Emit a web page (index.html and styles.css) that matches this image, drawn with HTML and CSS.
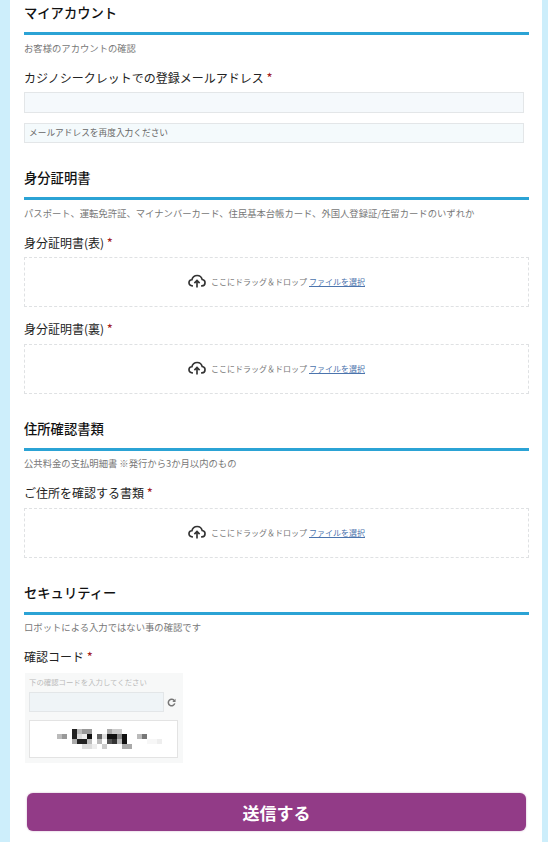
FILE: index.html
```html
<!DOCTYPE html>
<html lang="ja">
<head>
    <meta charset="UTF-8">
    <meta name="viewport" content="width=device-width, initial-scale=1.0">
    <title>マイアカウント</title>
    <link rel="stylesheet" href="styles.css">
</head>
<body>
    <svg class="icon-defs">
        <symbol id="cloud" viewBox="0 0 24 18">
            <path d="M6.5 15.5H5.6C3 15.5 1.3 13.6 1.3 11.4C1.3 9.2 3 7.4 5.2 7.3C6 4 8.8 1.6 12.2 1.6C15.5 1.6 18.2 3.9 18.9 7C21 7.2 22.7 9 22.7 11.2C22.7 13.6 20.9 15.5 18.5 15.5H17.5" fill="none" stroke="#333" stroke-width="2.2"/>
            <path d="M12 17.8V8.5M8.5 11.8L12 8.3L15.5 11.8" fill="none" stroke="#333" stroke-width="2.2"/>
        </symbol>
    </svg>
    <form class="form">
        <section class="section section-account">
            <h2 class="section-title">マイアカウント</h2>
            <p class="section-note">お客様のアカウントの確認</p>
            <label class="field-label">カジノシークレットでの登録メールアドレス <span class="required">*</span></label>
            <div class="text-input text-input-first"></div>
            <div class="text-input text-input-second">メールアドレスを再度入力ください</div>
        </section>

        <section class="section section-id">
            <h2 class="section-title">身分証明書</h2>
            <p class="section-note">パスポート、運転免許証、マイナンバーカード、住民基本台帳カード、外国人登録証/在留カードのいずれか</p>
            <label class="field-label">身分証明書(表) <span class="required">*</span></label>
            <div class="dropzone">
                <svg class="cloud-icon"><use href="#cloud"/></svg>
                <span class="drop-text">ここにドラッグ＆ドロップ</span>
                <a class="drop-link">ファイルを選択</a>
            </div>
            <label class="field-label field-label-back">身分証明書(裏) <span class="required">*</span></label>
            <div class="dropzone dropzone-back">
                <svg class="cloud-icon"><use href="#cloud"/></svg>
                <span class="drop-text">ここにドラッグ＆ドロップ</span>
                <a class="drop-link">ファイルを選択</a>
            </div>
        </section>

        <section class="section section-address">
            <h2 class="section-title">住所確認書類</h2>
            <p class="section-note">公共料金の支払明細書 ※発行から3か月以内のもの</p>
            <label class="field-label">ご住所を確認する書類 <span class="required">*</span></label>
            <div class="dropzone dropzone-back">
                <svg class="cloud-icon"><use href="#cloud"/></svg>
                <span class="drop-text">ここにドラッグ＆ドロップ</span>
                <a class="drop-link">ファイルを選択</a>
            </div>
        </section>

        <section class="section section-security">
            <h2 class="section-title">セキュリティー</h2>
            <p class="section-note">ロボットによる入力ではない事の確認です</p>
            <label class="field-label">確認コード <span class="required">*</span></label>
            <div class="captcha">
                <p class="captcha-hint">下の確認コードを入力してください</p>
                <div class="captcha-row">
                    <div class="captcha-input"></div>
                    <svg class="reload-icon" viewBox="0 0 10 10"><path d="M8.2 3.2A3.6 3.6 0 1 0 8.6 6" fill="none" stroke="#777" stroke-width="1.7"/><path d="M9.5 0.8V4.4H5.9Z" fill="#777"/></svg>
                </div>
                <div class="captcha-image">
                    <svg class="captcha-pixels" viewBox="0 0 105 20" shape-rendering="crispEdges">
                        <!-- row 1 -->
                        <rect x="15" y="0" width="5" height="5" fill="#222"/>
                        <rect x="20" y="0" width="5" height="5" fill="#bbb"/>
                        <rect x="25" y="0" width="10" height="5" fill="#999"/>
                        <rect x="50" y="0" width="5" height="5" fill="#aaa"/>
                        <rect x="55" y="0" width="10" height="5" fill="#ccc"/>
                        <!-- row 2 -->
                        <rect x="0" y="5" width="5" height="5" fill="#bbb"/>
                        <rect x="5" y="5" width="5" height="5" fill="#999"/>
                        <rect x="15" y="5" width="5" height="5" fill="#222"/>
                        <rect x="20" y="5" width="5" height="5" fill="#ddd"/>
                        <rect x="25" y="5" width="5" height="5" fill="#eee"/>
                        <rect x="30" y="5" width="5" height="5" fill="#111"/>
                        <rect x="40" y="5" width="5" height="5" fill="#666"/>
                        <rect x="45" y="5" width="5" height="5" fill="#ddd"/>
                        <rect x="50" y="5" width="10" height="5" fill="#111"/>
                        <rect x="60" y="5" width="5" height="5" fill="#888"/>
                        <rect x="65" y="5" width="5" height="5" fill="#111"/>
                        <rect x="80" y="5" width="5" height="5" fill="#bbb"/>
                        <rect x="85" y="5" width="5" height="5" fill="#777"/>
                        <!-- row 3 -->
                        <rect x="15" y="10" width="5" height="5" fill="#aaa"/>
                        <rect x="20" y="10" width="10" height="5" fill="#222"/>
                        <rect x="30" y="10" width="5" height="5" fill="#bbb"/>
                        <rect x="40" y="10" width="5" height="5" fill="#bbb"/>
                        <rect x="50" y="10" width="5" height="5" fill="#555"/>
                        <rect x="55" y="10" width="5" height="5" fill="#333"/>
                        <rect x="60" y="10" width="5" height="5" fill="#bbb"/>
                        <rect x="65" y="10" width="5" height="5" fill="#111"/>
                        <rect x="90" y="10" width="10" height="5" fill="#f7f7f7"/>
                        <rect x="100" y="10" width="5" height="5" fill="#eee"/>
                        <!-- row 4 -->
                        <rect x="25" y="15" width="10" height="5" fill="#ddd"/>
                        <rect x="35" y="15" width="5" height="5" fill="#eee"/>
                        <rect x="45" y="15" width="5" height="5" fill="#ccc"/>
                        <rect x="65" y="15" width="10" height="5" fill="#aaa"/>
                    </svg>
                </div>
            </div>
        </section>

        <button type="button" class="submit-button">送信する</button>
    </form>
</body>
</html>
```

FILE: styles.css
```css
body {
    background-color: #cdeefb;
    color: #222;
    font-family: "Noto Sans CJK JP", "Noto Sans", sans-serif;
    margin: 0;
    padding: 0;
}
.icon-defs {
    display: none;
}
.form {
    background-color: white;
    margin: 0 6px 0 10px;
    padding: 0 13px 0 14px;
    height: 842px;
    box-sizing: border-box;
    overflow: hidden;
}
.section-title {
    font-size: 13.3px;
    line-height: 20px;
    font-weight: 500;
    color: #111;
    margin: 0;
    padding-bottom: 9px;
    border-bottom: 3px solid #2ba3d5;
}
.section-account .section-title {
    padding-top: 3px;
}
.section-note {
    font-size: 9.33px;
    line-height: 12px;
    color: #777;
    margin: 7px 0 14px;
}
.section-address .section-note,
.section-security .section-note {
    margin-top: 6px;
}
.field-label {
    display: block;
    font-size: 12px;
    line-height: 20px;
    color: #222;
}
.required {
    color: #a32020;
    font-size: 13px;
}
.text-input {
    box-sizing: border-box;
    margin-right: 5px;
    border: 1px solid #e3e6e8;
    font-size: 8.7px;
    color: #666;
    padding-left: 4px;
}
.text-input-first {
    height: 21px;
    margin-top: 4px;
    background-color: #f5f9fc;
}
.text-input-second {
    height: 20px;
    line-height: 18px;
    margin-top: 10px;
    background-color: #f4fafc;
}
.section-id,
.section-address,
.section-security {
    margin-top: 25px;
}
.dropzone {
    box-sizing: border-box;
    height: 50px;
    margin-top: 4px;
    padding-bottom: 2px;
    border: 1px dashed #dfe1e3;
    display: flex;
    align-items: center;
    justify-content: center;
    font-size: 8px;
    color: #777;
}
.dropzone-back {
    margin-top: 5px;
}
.field-label-back {
    margin-top: 12px;
}
.cloud-icon {
    width: 18px;
    height: 14px;
    margin-right: 5px;
}
.drop-text {
    margin-right: 2px;
}
.drop-link {
    color: #4b74ad;
    text-decoration: underline;
}
.captcha {
    width: 158px;
    height: 90px;
    box-sizing: border-box;
    margin-top: 6px;
    margin-left: 1px;
    padding: 4px 4px 0;
    background-color: #f7f8f8;
}
.captcha-hint {
    font-size: 7.4px;
    line-height: 9px;
    color: #bbb;
    margin: 0;
}
.captcha-row {
    display: flex;
    align-items: center;
    margin-top: 6px;
}
.captcha-input {
    width: 135px;
    height: 20px;
    box-sizing: border-box;
    border: 1px solid #e3e6e8;
    background-color: #eff4f7;
}
.reload-icon {
    width: 9px;
    height: 9px;
    margin-left: 3px;
}
.captcha-image {
    width: 149px;
    height: 38px;
    box-sizing: border-box;
    margin-top: 8px;
    border: 1px solid #e3e3e3;
    background-color: white;
    display: flex;
    align-items: center;
}
.captcha-pixels {
    width: 105px;
    height: 20px;
    margin-left: 27px;
}
.submit-button {
    display: block;
    width: 499px;
    height: 38px;
    margin: 30px 0 0 3px;
    border: 0;
    border-radius: 6px;
    box-shadow: 0 0 2px #c9a6c4;
    background-color: #923b87;
    color: white;
    font-family: inherit;
    font-size: 17px;
    font-weight: 700;
}
```
